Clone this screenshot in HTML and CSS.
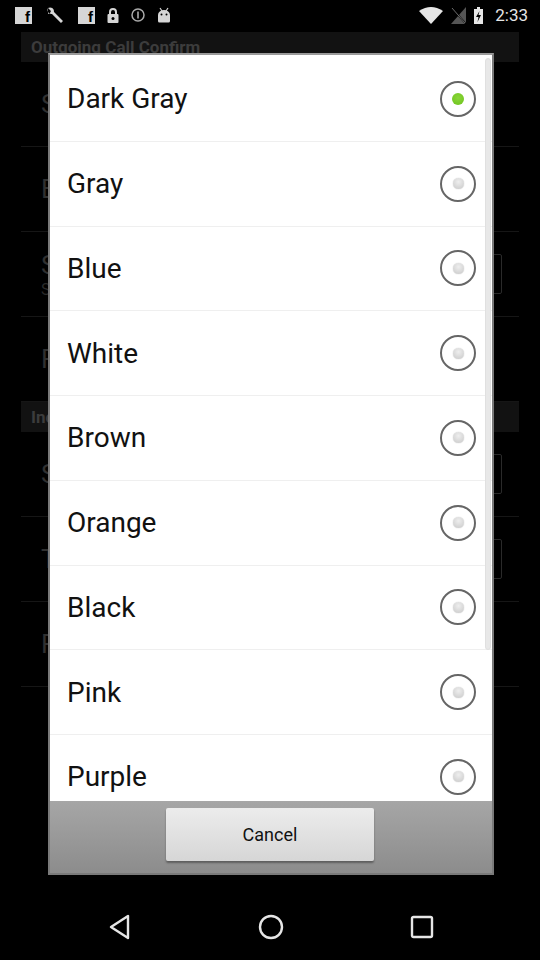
FILE: index.html
```html
<!DOCTYPE html>
<html>
<head>
<meta charset="utf-8">
<link rel="stylesheet" href="styles.css">
</head>
<body>
<div class="screen">
  <div class="status">
    <div class="status-left">
      <span class="fb">f</span>
      <svg class="ic" width="22" height="18" viewBox="0 0 22 18"><path d="M4 2 a4 4 0 0 0 4 6 l9 9 2-2 -9-9 a4 4 0 0 0 -6-4 l3 3 -1 2 -2 1z" fill="#d6d6d6"/></svg>
      <span class="fb">f</span>
      <svg class="ic" width="12" height="17" viewBox="0 0 12 17"><path d="M3 7 V5 a3 3 0 0 1 6 0 V7" fill="none" stroke="#d6d6d6" stroke-width="2"/><rect x="0.5" y="7" width="11" height="9" rx="1" fill="#d6d6d6"/><circle cx="6" cy="11.5" r="1.5" fill="#000"/></svg>
      <svg class="ic" width="14" height="14" viewBox="0 0 14 14"><circle cx="7" cy="7" r="6" fill="none" stroke="#aaa" stroke-width="1.5"/><rect x="6.2" y="3.5" width="1.6" height="7" fill="#aaa"/></svg>
      <svg class="ic" width="14" height="16" viewBox="0 0 14 16"><path d="M3 1 l2 3 M11 1 l-2 3" stroke="#d6d6d6" stroke-width="1.2"/><path d="M1 8 a6 5 0 0 1 12 0 v6 a1.5 1.5 0 0 1 -1.5 1.5 h-9 a1.5 1.5 0 0 1 -1.5 -1.5z" fill="#d6d6d6"/><circle cx="4.5" cy="7.5" r="1" fill="#000"/><circle cx="9.5" cy="7.5" r="1" fill="#000"/></svg>
    </div>
    <div class="status-right">
      <svg class="ic" width="24" height="17" viewBox="0 0 24 17"><path d="M0 4 Q12 -4 24 4 L12 17z" fill="#e6e6e6"/></svg>
      <svg class="ic" width="15" height="17" viewBox="0 0 15 17"><path d="M15 0 V17 H0z" fill="#555"/><path d="M0 0 L15 17" stroke="#000" stroke-width="1.5"/><path d="M1 1 L14 16" stroke="#888" stroke-width="0.8"/></svg>
      <svg class="ic" width="9" height="17" viewBox="0 0 9 17"><rect x="3" y="0" width="3" height="2" fill="#e6e6e6"/><rect x="0" y="2" width="9" height="15" fill="#e6e6e6"/><path d="M5.5 4 L2 10 H4.5 L3.5 15 L7 8 H4.5z" fill="#000"/></svg>
      <span class="time">2:33</span>
    </div>
  </div>

  <div class="app">
    <div class="cat">Outgoing Call Confirm</div>
    <div class="pref"><span class="pt">Show</span></div>
    <div class="pref"><span class="pt">Enable</span></div>
    <div class="pref two"><span class="pt">Sound</span><span class="ps">Sum</span><span class="box"></span></div>
    <div class="pref"><span class="pt">Font</span></div>
    <div class="cat">Incoming Call</div>
    <div class="pref"><span class="pt">Show</span><span class="box"></span></div>
    <div class="pref"><span class="pt">Text</span><span class="box"></span></div>
    <div class="pref"><span class="pt">Font</span></div>
  </div>

  <div class="nav">
    <svg width="24" height="28" viewBox="0 0 24 28"><path d="M20 3 V25 L3 14z" fill="none" stroke="#e6e6e6" stroke-width="2.4" stroke-linejoin="round"/></svg>
    <svg width="26" height="26" viewBox="0 0 26 26"><circle cx="13" cy="13" r="11" fill="none" stroke="#e6e6e6" stroke-width="2.4"/></svg>
    <svg width="24" height="24" viewBox="0 0 24 24"><rect x="2" y="2" width="20" height="20" rx="1.5" fill="none" stroke="#e6e6e6" stroke-width="2.4"/></svg>
  </div>

  <div class="dialog">
    <div class="list">
      <div class="row"><span class="label">Dark Gray</span><span class="radio on"></span></div>
      <div class="row"><span class="label">Gray</span><span class="radio"></span></div>
      <div class="row"><span class="label">Blue</span><span class="radio"></span></div>
      <div class="row"><span class="label">White</span><span class="radio"></span></div>
      <div class="row"><span class="label">Brown</span><span class="radio"></span></div>
      <div class="row"><span class="label">Orange</span><span class="radio"></span></div>
      <div class="row"><span class="label">Black</span><span class="radio"></span></div>
      <div class="row"><span class="label">Pink</span><span class="radio"></span></div>
      <div class="row"><span class="label">Purple</span><span class="radio"></span></div>
      <div class="scrollbar"></div>
    </div>
    <div class="buttons">
      <button class="cancel">Cancel</button>
    </div>
  </div>
</div>
</body>
</html>
```

FILE: styles.css
```css
* { box-sizing: border-box; }
html, body { margin: 0; padding: 0; background: #000; }
.screen {
  position: relative;
  width: 540px;
  height: 960px;
  background: #000;
  display: flex;
  flex-direction: column;
  overflow: hidden;
  font-family: Roboto, "Noto Sans", sans-serif;
}
.status {
  height: 30px;
  display: flex;
  align-items: center;
  justify-content: space-between;
  padding: 0 12px 0 15px;
}
.status-left, .status-right { display: flex; align-items: center; }
.status-left { gap: 12px; }
.status-right { gap: 8px; }
.ic { display: block; }
.fb {
  width: 17px; height: 17px;
  background: #d6d6d6; color: #000;
  font: bold 15px/19px "Liberation Sans", sans-serif;
  text-align: right; padding-right: 2px;
  display: block;
}
.time { color: #e6e6e6; font-size: 17px; margin-left: 4px; }

.app {
  flex: 1;
  padding: 2px 21px 0 21px;
  display: flex;
  flex-direction: column;
}
.cat {
  height: 30px;
  background: #121212;
  color: #3c3c3c;
  font-weight: bold;
  font-size: 17px;
  line-height: 30px;
  padding-left: 10px;
}
.pref {
  height: 85px;
  border-bottom: 1px solid #161616;
  display: flex;
  flex-direction: column;
  justify-content: center;
  position: relative;
  padding-left: 20px;
}
.pt { color: #303030; font-size: 26px; }
.ps { color: #2a2a2a; font-size: 16px; }
.box {
  position: absolute;
  right: 17px; top: 22px;
  width: 30px; height: 40px;
  border: 1px solid #2a2a2a;
  border-radius: 2px;
}
.nav {
  height: 66px;
  display: flex;
  align-items: center;
  justify-content: space-between;
  padding: 0 106px 0 108px;
}

.dialog {
  position: absolute;
  left: 48px;
  top: 53px;
  width: 446px;
  height: 822px;
  border: 2px solid #7a7a7a;
  border-top-color: #9a9a9a;
  display: flex;
  flex-direction: column;
  background: #fff;
}
.list {
  position: relative;
  height: 746px;
  overflow: hidden;
  background: #fff;
  padding-top: 2px;
}
.row {
  height: 84.75px;
  border-bottom: 1px solid #efefef;
  display: flex;
  align-items: center;
  justify-content: space-between;
  padding: 0 16px 0 17px;
}
.label { font-size: 28px; color: #111; }
.radio {
  position: relative;
  width: 36px; height: 36px;
  border: 2px solid #666;
  border-radius: 50%;
}
.radio::after {
  content: "";
  position: absolute;
  left: 50%; top: 50%;
  width: 11px; height: 11px;
  margin: -5.5px 0 0 -5.5px;
  border-radius: 50%;
  background: radial-gradient(circle at 50% 35%, #eeeeee, #c8c8c8);
  box-shadow: 0 0 1px #aaa;
}
.radio.on::after {
  width: 12px; height: 12px;
  margin: -6px 0 0 -6px;
  background: radial-gradient(circle at 50% 40%, #8ad63a, #6cc21c);
  box-shadow: none;
}
.scrollbar {
  position: absolute;
  right: 1px;
  top: 3px;
  width: 6px;
  height: 592px;
  background: #e8e8e8;
  border: 1px solid #e0e0e0;
  border-radius: 3px;
}
.buttons {
  flex: 1;
  background: linear-gradient(#a6a6a6, #8c8c8c);
  display: flex;
  justify-content: center;
  padding-top: 7px;
}
.cancel {
  width: 208px;
  height: 53px;
  margin-left: -2px;
  border: none;
  border-radius: 2px;
  background: linear-gradient(#ececec, #d6d6d6);
  box-shadow: 0 2px 2px rgba(0,0,0,0.35);
  font-family: Roboto, sans-serif;
  font-size: 18px;
  color: #111;
}
```
